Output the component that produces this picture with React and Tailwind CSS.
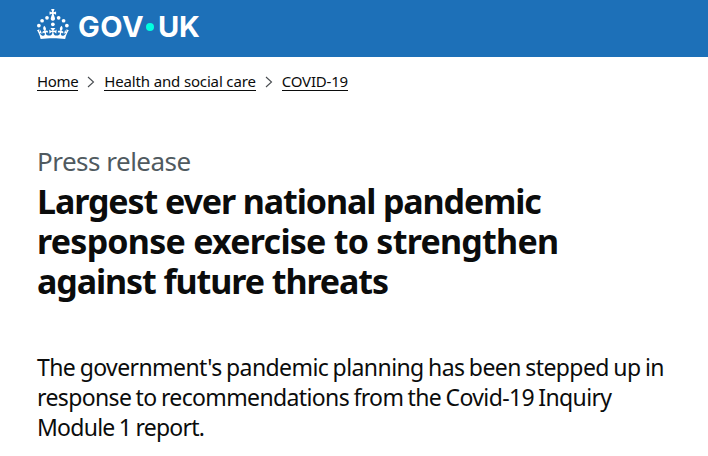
const crown =
  'M33.1,9.8c.2-.1.3-.3.5-.5l4.6,2.4v-6.8l-4.6,1.5c-.1-.2-.3-.3-.5-.5l1.9-5.9h-6.7l1.9,5.9c-.2.1-.3.3-.5.5l-4.6-1.5v6.8l4.6-2.4c.1.2.3.3.5.5l-2.6,8c-.9,2.8,1.2,5.7,4.1,5.7h0c3,0,5.1-2.9,4.1-5.7l-2.6-8ZM37,37.9s-3.4,3.8-4.1,6.1c2.2,0,4.2-.5,6.4-2.8l-.7,8.5c-2-2.8-4.4-4.1-5.7-3.8.1,3.1.5,6.7,5.8,7.2,3.7.3,6.7-1.5,7-3.8.4-2.6-2-4.3-3.7-1.6-1.4-4.5,2.4-6.1,4.9-3.2-1.9-4.5-1.8-7.7,2.4-10.9,3,4,2.6,7.3-1.2,11.1,2.4-1.3,6.2,0,4,4.6-1.2-2.8-3.7-2.2-4.2.2-.3,1.7.7,3.7,3,4.2,1.9.3,4.7-.9,7-5.9-1.3,0-2.4.7-3.9,1.7l2.4-8c.6,2.3,1.4,3.7,2.2,4.5.6-1.6.5-2.8,0-5.3l5,1.8c-2.6,3.6-5.2,8.7-7.3,17.5-7.4-1.1-15.7-1.7-24.5-1.7h0c-8.8,0-17.1.6-24.5,1.7-2.1-8.9-4.7-13.9-7.3-17.5l5-1.8c-.5,2.5-.6,3.7,0,5.3.8-.8,1.6-2.3,2.2-4.5l2.4,8c-1.5-1-2.6-1.7-3.9-1.7,2.3,5,5.2,6.2,7,5.9,2.3-.4,3.3-2.4,3-4.2-.5-2.4-3-3.1-4.2-.2-2.2-4.6,1.6-6,4-4.6-3.7-3.7-4.2-7.1-1.2-11.1,4.2,3.2,4.3,6.4,2.4,10.9,2.5-2.8,6.3-1.3,4.9,3.2-1.8-2.7-4.1-1-3.7,1.6.3,2.3,3.3,4.1,7,3.8,5.4-.5,5.7-4.2,5.8-7.2-1.3-.2-3.7,1-5.7,3.8l-.7-8.5c2.2,2.3,4.2,2.7,6.4,2.8-.7-2.3-4.1-6.1-4.1-6.1h10.6,0Z';

const jewels = [[20, 17.6], [10.2, 23.5], [3.7, 33.2], [31.7, 30.6], [43.3, 17.6], [53.2, 23.5], [59.7, 33.2]];

function Logo() {
  return (
    <a className="flex items-start h-[30px] text-white">
      <svg className="w-8 h-[30px] shrink-0" viewBox="0 0 64 60" fill="currentColor" aria-hidden="true">
        {jewels.map(([x, y]) => <circle key={x} cx={x} cy={y} r="3.7" />)}
        <path d={crown} />
      </svg>
      <span className="ml-[9px] w-[68px] font-['Inter',sans-serif] text-[29px] leading-9 font-bold tracking-[0.5px]">GOV</span>
      <span className="mt-[14px] size-2 rounded-full bg-[#00ffe0]" />
      <span className="ml-1 font-['Inter',sans-serif] text-[29px] leading-9 font-bold tracking-[-0.3px]">UK</span>
    </a>
  );
}

function Chevron() {
  return (
    <svg className="mx-[9px] mt-1 w-2 h-3 shrink-0" viewBox="0 0 8 12" fill="none" stroke="#484c50" strokeWidth="1.1" aria-hidden="true">
      <path d="M1 1 6.5 6 1 11" />
    </svg>
  );
}

export default function App() {
  return (
    <div className="h-[456px] overflow-hidden bg-white text-[#0b0c0c] font-['Noto_Sans',sans-serif]">
      <header className="h-[57px] bg-[#1d70b8] pl-[37px] pt-[9px]">
        <Logo />
      </header>
      <nav className="flex h-5 mt-[15px] pl-[37px] text-[15px] leading-[18px] whitespace-nowrap">
        <a className="h-[19px] border-b border-[#0b0c0c] tracking-[-0.35px]">Home</a>
        <Chevron />
        <a className="h-[19px] border-b border-[#0b0c0c] tracking-[-0.15px]">Health and social care</a>
        <Chevron />
        <a className="h-[19px] border-b border-[#0b0c0c] tracking-[-0.2px]">COVID-19</a>
      </nav>
      <main className="pl-[37px] pt-[54px] whitespace-nowrap">
        <p className="text-[26px] leading-[30px] tracking-[-0.5px] text-[#505a5f]">Press release</p>
        <h1 className="mt-[5px] text-[34px] leading-10 font-bold">
          <span className="block tracking-[-1.1px]">Largest ever national pandemic</span>
          <span className="block tracking-[-0.75px]">response exercise to strengthen</span>
          <span className="block tracking-[-1.08px]">against future threats</span>
        </h1>
        <p className="mt-[51px] text-[23px] leading-[30px] [word-spacing:-1px]">
          <span className="block tracking-[-0.58px]">The government's pandemic planning has been stepped up in</span>
          <span className="block tracking-[-0.63px]">response to recommendations from the Covid-19 Inquiry</span>
          <span className="block tracking-[-0.75px]">Module 1 report.</span>
        </p>
      </main>
    </div>
  );
}
